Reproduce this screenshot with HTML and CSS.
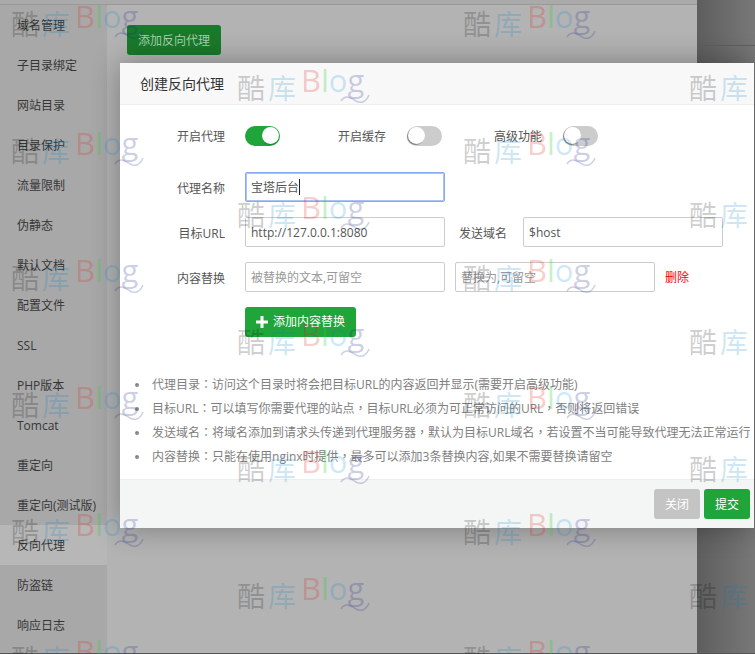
FILE: index.html
```html
<!DOCTYPE html>
<html lang="zh">
<head>
<meta charset="utf-8">
<title>创建反向代理</title>
<link rel="stylesheet" href="styles.css">
</head>
<body>
<div class="page">
  <div class="topbar"></div>
  <div class="panel">
    <nav class="side">
      <a>域名管理</a><a>子目录绑定</a><a>网站目录</a><a>目录保护</a><a>流量限制</a><a>伪静态</a><a>默认文档</a><a>配置文件</a><a>SSL</a><a>PHP版本</a><a>Tomcat</a><a>重定向</a><a>重定向(测试版)</a><a class="active">反向代理</a><a>防盗链</a><a>响应日志</a>
    </nav>
    <main class="content">
      <button class="add-proxy">添加反向代理</button>
    </main>
  </div>
  <div class="outer"></div>

  <section class="modal">
    <header class="modal-head">创建反向代理</header>
    <div class="modal-body">
      <div class="row toggles">
        <label class="lab">开启代理</label><span class="sw on"></span>
        <label class="lab2">开启缓存</label><span class="sw"></span>
        <label class="lab3">高级功能</label><span class="sw"></span>
      </div>
      <div class="row">
        <label class="lab">代理名称</label>
        <div class="field focus">宝塔后台<i class="caret"></i></div>
      </div>
      <div class="row">
        <label class="lab">目标URL</label>
        <div class="field">http://127.0.0.1:8080</div>
        <label class="lab4">发送域名</label>
        <div class="field">$host</div>
      </div>
      <div class="row">
        <label class="lab">内容替换</label>
        <div class="field ph">被替换的文本,可留空</div>
        <div class="field ph second">替换为,可留空</div>
        <a class="del">删除</a>
      </div>
      <button class="add-rep"><svg class="plus" viewBox="0 0 12 12" width="12" height="12"><path d="M4.5 0h3v4.5H12v3H7.5V12h-3V7.5H0v-3h4.5z"/></svg>添加内容替换</button>
      <ul class="help">
        <li>代理目录<span class="p" lang="zh-Hant">：</span>访问这个目录时将会把目标URL的内容返回并显示(需要开启高级功能)</li>
        <li>目标URL<span class="p" lang="zh-Hant">：</span>可以填写你需要代理的站点<span class="p" lang="zh-Hant">，</span>目标URL必须为可正常访问的URL<span class="p" lang="zh-Hant">，</span>否则将返回错误</li>
        <li>发送域名<span class="p" lang="zh-Hant">：</span>将域名添加到请求头传递到代理服务器<span class="p" lang="zh-Hant">，</span>默认为目标URL域名<span class="p" lang="zh-Hant">，</span>若设置不当可能导致代理无法正常运行</li>
        <li>内容替换<span class="p" lang="zh-Hant">：</span>只能在使用nginx时提供<span class="p" lang="zh-Hant">，</span>最多可以添加3条替换内容,如果不需要替换请留空</li>
      </ul>
    </div>
    <footer class="modal-foot">
      <button class="btn close">关闭</button>
      <button class="btn submit">提交</button>
    </footer>
  </section>

  <div class="wm-layer" aria-hidden="true">
    <div class="wm-col">
      <div class="wm"><b class="k">酷</b><b class="ku">库</b><span class="bl">B</span><span class="ll">l</span><span class="ol">o</span><span class="gl">g</span><svg class="wave" viewBox="0 0 30 10" width="30" height="10"><path d="M1 7C6 0 11 4 16 7S26 8 29 1"/></svg></div>
      <div class="wm"><b class="k">酷</b><b class="ku">库</b><span class="bl">B</span><span class="ll">l</span><span class="ol">o</span><span class="gl">g</span><svg class="wave" viewBox="0 0 30 10" width="30" height="10"><path d="M1 7C6 0 11 4 16 7S26 8 29 1"/></svg></div>
      <div class="wm"><b class="k">酷</b><b class="ku">库</b><span class="bl">B</span><span class="ll">l</span><span class="ol">o</span><span class="gl">g</span><svg class="wave" viewBox="0 0 30 10" width="30" height="10"><path d="M1 7C6 0 11 4 16 7S26 8 29 1"/></svg></div>
      <div class="wm"><b class="k">酷</b><b class="ku">库</b><span class="bl">B</span><span class="ll">l</span><span class="ol">o</span><span class="gl">g</span><svg class="wave" viewBox="0 0 30 10" width="30" height="10"><path d="M1 7C6 0 11 4 16 7S26 8 29 1"/></svg></div>
      <div class="wm"><b class="k">酷</b><b class="ku">库</b><span class="bl">B</span><span class="ll">l</span><span class="ol">o</span><span class="gl">g</span><svg class="wave" viewBox="0 0 30 10" width="30" height="10"><path d="M1 7C6 0 11 4 16 7S26 8 29 1"/></svg></div>
      <div class="wm"><b class="k">酷</b><b class="ku">库</b><span class="bl">B</span><span class="ll">l</span><span class="ol">o</span><span class="gl">g</span><svg class="wave" viewBox="0 0 30 10" width="30" height="10"><path d="M1 7C6 0 11 4 16 7S26 8 29 1"/></svg></div>
    </div>
    <div class="wm-col even">
      <div class="wm"><b class="k">酷</b><b class="ku">库</b><span class="bl">B</span><span class="ll">l</span><span class="ol">o</span><span class="gl">g</span><svg class="wave" viewBox="0 0 30 10" width="30" height="10"><path d="M1 7C6 0 11 4 16 7S26 8 29 1"/></svg></div>
      <div class="wm"><b class="k">酷</b><b class="ku">库</b><span class="bl">B</span><span class="ll">l</span><span class="ol">o</span><span class="gl">g</span><svg class="wave" viewBox="0 0 30 10" width="30" height="10"><path d="M1 7C6 0 11 4 16 7S26 8 29 1"/></svg></div>
      <div class="wm"><b class="k">酷</b><b class="ku">库</b><span class="bl">B</span><span class="ll">l</span><span class="ol">o</span><span class="gl">g</span><svg class="wave" viewBox="0 0 30 10" width="30" height="10"><path d="M1 7C6 0 11 4 16 7S26 8 29 1"/></svg></div>
      <div class="wm"><b class="k">酷</b><b class="ku">库</b><span class="bl">B</span><span class="ll">l</span><span class="ol">o</span><span class="gl">g</span><svg class="wave" viewBox="0 0 30 10" width="30" height="10"><path d="M1 7C6 0 11 4 16 7S26 8 29 1"/></svg></div>
      <div class="wm"><b class="k">酷</b><b class="ku">库</b><span class="bl">B</span><span class="ll">l</span><span class="ol">o</span><span class="gl">g</span><svg class="wave" viewBox="0 0 30 10" width="30" height="10"><path d="M1 7C6 0 11 4 16 7S26 8 29 1"/></svg></div>
    </div>
    <div class="wm-col">
      <div class="wm"><b class="k">酷</b><b class="ku">库</b><span class="bl">B</span><span class="ll">l</span><span class="ol">o</span><span class="gl">g</span><svg class="wave" viewBox="0 0 30 10" width="30" height="10"><path d="M1 7C6 0 11 4 16 7S26 8 29 1"/></svg></div>
      <div class="wm"><b class="k">酷</b><b class="ku">库</b><span class="bl">B</span><span class="ll">l</span><span class="ol">o</span><span class="gl">g</span><svg class="wave" viewBox="0 0 30 10" width="30" height="10"><path d="M1 7C6 0 11 4 16 7S26 8 29 1"/></svg></div>
      <div class="wm"><b class="k">酷</b><b class="ku">库</b><span class="bl">B</span><span class="ll">l</span><span class="ol">o</span><span class="gl">g</span><svg class="wave" viewBox="0 0 30 10" width="30" height="10"><path d="M1 7C6 0 11 4 16 7S26 8 29 1"/></svg></div>
      <div class="wm"><b class="k">酷</b><b class="ku">库</b><span class="bl">B</span><span class="ll">l</span><span class="ol">o</span><span class="gl">g</span><svg class="wave" viewBox="0 0 30 10" width="30" height="10"><path d="M1 7C6 0 11 4 16 7S26 8 29 1"/></svg></div>
      <div class="wm"><b class="k">酷</b><b class="ku">库</b><span class="bl">B</span><span class="ll">l</span><span class="ol">o</span><span class="gl">g</span><svg class="wave" viewBox="0 0 30 10" width="30" height="10"><path d="M1 7C6 0 11 4 16 7S26 8 29 1"/></svg></div>
      <div class="wm"><b class="k">酷</b><b class="ku">库</b><span class="bl">B</span><span class="ll">l</span><span class="ol">o</span><span class="gl">g</span><svg class="wave" viewBox="0 0 30 10" width="30" height="10"><path d="M1 7C6 0 11 4 16 7S26 8 29 1"/></svg></div>
    </div>
    <div class="wm-col even">
      <div class="wm"><b class="k">酷</b><b class="ku">库</b></div>
      <div class="wm"><b class="k">酷</b><b class="ku">库</b></div>
      <div class="wm"><b class="k">酷</b><b class="ku">库</b></div>
      <div class="wm"><b class="k">酷</b><b class="ku">库</b></div>
      <div class="wm"><b class="k">酷</b><b class="ku">库</b></div>
    </div>
  </div>
</div>
</body>
</html>
```

FILE: styles.css
```css
* { box-sizing: border-box; }
html, body { margin: 0; padding: 0; }
body {
  font-family: "Open Sans", "Noto Sans CJK SC", sans-serif;
  font-size: 12px;
  color: #555;
}
.page {
  position: relative;
  width: 755px;
  height: 654px;
  overflow: hidden;
  background: #555;
}
.topbar {
  width: 697px;
  height: 4px;
  background: #aaa;
}
.panel {
  display: flex;
  width: 697px;
  height: 649px;
  border-top: 1px solid #999;
  background: #ababab;
  border-radius: 0 0 3px 0;
}
.side {
  display: flex;
  flex-direction: column;
  width: 107px;
  background: #a8a8a8;
  flex: none;
}
.side a {
  display: block;
  height: 40px;
  line-height: 42px;
  padding-left: 17px;
  color: #363636;
  flex: none;
}
.side a.active { background: #b7b7b7; }
.content {
  flex: 1;
  padding: 20px 20px;
  background: #b3b3b3;
}
.add-proxy {
  display: block;
  width: 94px;
  height: 30px;
  border: 0;
  border-radius: 3px;
  background: #197a2b;
  color: #a2d2aa;
  font: inherit;
  padding: 0;
}
.outer {
  position: absolute;
  left: 697px;
  top: 0;
  right: 0;
  bottom: 1px;
  background:
    linear-gradient(#5f5f5f, #5f5f5f) 0 45px / 100% 1px no-repeat,
    linear-gradient(90deg, #5e5e5e, #787878);
}
.modal {
  position: absolute;
  left: 120px;
  top: 63px;
  width: 634px;
  height: 465px;
  display: flex;
  flex-direction: column;
  background: #fff;
  border-radius: 2px;
  box-shadow: 0 0 30px rgba(0, 0, 0, .32);
}
.modal-head {
  height: 42px;
  line-height: 41px;
  padding-left: 20px;
  font-size: 14px;
  color: #333;
  background: #f8f8f8;
  border-bottom: 1px solid #eee;
  flex: none;
}
.modal-body {
  flex: 1;
  padding: 21px 0 0 0;
}
.row {
  display: flex;
  align-items: center;
  height: 30px;
  margin-bottom: 15px;
}
.toggles { height: 20px; margin-bottom: 26px; }
.lab {
  width: 105px;
  padding-top: 2px;
  text-align: right;
  margin-right: 20px;
  color: #555;
  flex: none;
}
.toggles .lab { padding-top: 0; }
.lab2 { margin-left: 58px; margin-right: 21px; color: #555; }
.lab3 { margin-left: 52px; margin-right: 21px; color: #555; }
.lab4 { margin-left: 14px; margin-right: 16px; padding-top: 2px; color: #555; }
.sw {
  position: relative;
  width: 35px;
  height: 20px;
  border-radius: 10px;
  background: #ccc;
  flex: none;
}
.sw::after {
  content: "";
  position: absolute;
  left: 1px;
  top: 1px;
  width: 17px;
  height: 17px;
  border-radius: 50%;
  background: #fff;
  box-shadow: -1px 1px 1px rgba(0, 0, 0, .4);
}
.sw.on { background: #20a53a; }
.sw.on::after { left: 17px; box-shadow: 0 1px 1px rgba(0, 0, 0, .2); }
.field {
  width: 200px;
  height: 30px;
  line-height: 29px;
  padding: 0 5px;
  border: 1px solid #ccc;
  border-radius: 2px;
  color: #555;
  flex: none;
  white-space: nowrap;
}
.field.focus { line-height: 30px; border: 1px solid #85aaf0; box-shadow: 0 0 0 1px #a8c4f5 inset; }
.caret {
  display: inline-block;
  width: 1px;
  height: 16px;
  background: #222;
  vertical-align: -3px;
}
.field.ph { color: #999; }
.field.second { margin-left: 10px; }
.del { margin-left: 10px; color: #f00; }
.add-rep {
  display: flex;
  align-items: center;
  justify-content: center;
  width: 111px;
  height: 30px;
  margin-left: 125px;
  border: 0;
  border-radius: 3px;
  background: #20a53a;
  color: #fff;
  font: inherit;
  line-height: 32px;
  padding: 0;
}
.plus { fill: #fff; margin-right: 5px; }
.help {
  list-style: none;
  margin: 36px 0 0;
  padding: 0 0 0 16px;
  color: #808080;
  line-height: 24px;
  white-space: nowrap;
}
.help li { position: relative; height: 24px; padding-left: 16px; }
.help .p { font-family: "Noto Sans CJK TC", sans-serif; line-height: 0; }
.help li::before {
  content: "";
  position: absolute;
  left: -1px;
  top: 10px;
  width: 4px;
  height: 4px;
  border-radius: 50%;
  background: #888;
}
.modal-foot {
  display: flex;
  justify-content: flex-end;
  gap: 4px;
  height: 49px;
  padding: 9px 4px 0 0;
  background: #f4f6f6;
  border-top: 1px solid #eee;
  flex: none;
}
.btn {
  width: 46px;
  height: 30px;
  border: 0;
  border-radius: 3px;
  color: #fff;
  font: inherit;
  padding: 0;
}
.close { background: #c4c4c4; }
.submit { background: #20a53a; }

.wm-layer {
  position: absolute;
  inset: 0;
  display: flex;
  overflow: hidden;
  pointer-events: none;
  padding-top: 5px;
}
.wm-col { width: 226px; flex: none; padding-left: 11px; }
.wm-col.even { padding-top: 64px; }
.wm {
  position: relative;
  display: flex;
  align-items: flex-start;
  height: 127px;
  white-space: nowrap;
}
.wm b {
  font-family: "Noto Sans CJK SC", sans-serif;
  font-weight: 400;
  font-size: 28px;
  line-height: 36px;
  width: 31px;
  flex: none;
}
.wm .k { color: rgba(0, 0, 0, .2); }
.wm .ku { color: rgba(0, 125, 200, .2); }
.wm span {
  font-family: "Open Sans", sans-serif;
  font-weight: 400;
  font-size: 31px;
  line-height: 30px;
  margin-top: -4px;
}
.wm .bl { color: rgba(220, 40, 30, .24); margin-left: 2px; }
.wm .ll { color: rgba(40, 210, 40, .28); }
.wm .ol { color: rgba(0, 135, 215, .2); }
.wm .gl { color: rgba(30, 40, 140, .22); }
.wave {
  position: absolute;
  left: 103px;
  top: 25px;
  fill: none;
  stroke: rgba(30, 40, 140, .22);
  stroke-width: 1.5;
}
```
